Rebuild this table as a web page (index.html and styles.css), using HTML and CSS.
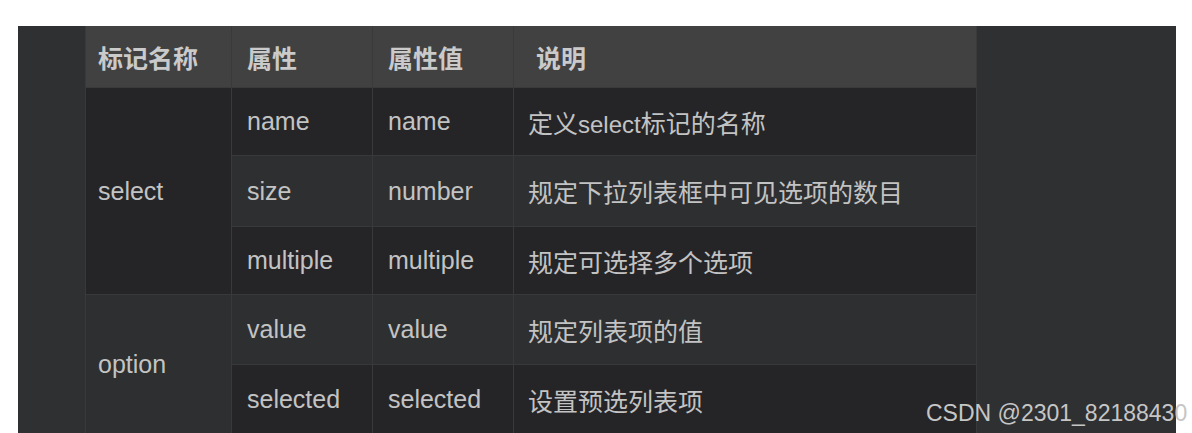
FILE: index.html
```html
<!DOCTYPE html>
<html lang="zh-CN">
<head>
<meta charset="utf-8">
<title>select 标记属性</title>
<link rel="stylesheet" href="styles.css">
</head>
<body>
<div class="panel">
  <table class="attr-table">
    <colgroup>
      <col class="c1"><col class="c2"><col class="c3"><col class="c4">
    </colgroup>
    <thead>
      <tr>
        <th class="first">标记名称</th>
        <th>属性</th>
        <th>属性值</th>
        <th class="desc-head">说明</th>
      </tr>
    </thead>
    <tbody>
      <tr class="r1 dark">
        <td class="first dark" rowspan="3">select</td>
        <td>name</td>
        <td>name</td>
        <td class="desc">定义<span class="inline-latin">select</span>标记的名称</td>
      </tr>
      <tr class="r2 light">
        <td>size</td>
        <td>number</td>
        <td class="desc">规定下拉列表框中可见选项的数目</td>
      </tr>
      <tr class="r3 dark">
        <td>multiple</td>
        <td>multiple</td>
        <td class="desc">规定可选择多个选项</td>
      </tr>
      <tr class="r4 light">
        <td class="first light" rowspan="2">option</td>
        <td>value</td>
        <td>value</td>
        <td class="desc">规定列表项的值</td>
      </tr>
      <tr class="r5 dark">
        <td>selected</td>
        <td>selected</td>
        <td class="desc">设置预选列表项</td>
      </tr>
    </tbody>
  </table>
</div>
<div class="watermark">CSDN @2301_82188430</div>
</body>
</html>
```

FILE: styles.css
```css
html, body {
  margin: 0;
  padding: 0;
  background: #ffffff;
  overflow: hidden;
}

body {
  position: relative;
  width: 1192px;
  height: 433px;
  font-family: "Liberation Sans", Arial, "Noto Sans CJK SC", sans-serif;
}

.panel {
  margin: 26px 0 0 18px;
  width: 1158px;
  height: 407px;
  background: #2f3032;
  padding-left: 67px;
  box-sizing: border-box;
  overflow: hidden;
}

.attr-table {
  border-collapse: collapse;
  table-layout: fixed;
  width: 891px;
  color: #c3c3c3;
  font-size: 25px;
  border-left: 1px solid #38393b;
  border-right: 1px solid #38393b;
}

.c1 { width: 146px; }
.c2 { width: 141px; }
.c3 { width: 141px; }
.c4 { width: 463px; }

.attr-table th,
.attr-table td {
  border: 1px solid #38393b;
  padding: 0 0 0 15px;
  text-align: left;
  vertical-align: middle;
  white-space: nowrap;
}

.attr-table thead th {
  background: #414141;
  height: 61px;
  font-weight: bold;
  color: #cacaca;
  border-top: none;
  border-color: #3a3a3a;
}

.attr-table th.first,
.attr-table td.first {
  padding-left: 12px;
}

.attr-table th.desc-head {
  padding-left: 22px;
}

.attr-table td.desc {
  padding-left: 14px;
}

.inline-latin {
  font-size: 24px;
}

.dark { background: #252528; }
.light { background: #2e2f31; }

.r1 { height: 68px; }
.r2 { height: 71px; }
.r3 { height: 68px; }
.r4 { height: 70px; }
.r5 { height: 70px; }

.watermark {
  position: absolute;
  left: 926px;
  top: 399px;
  font-family: "Liberation Sans", Arial, sans-serif;
  font-size: 23px;
  line-height: 28px;
  color: #c6c6c6;
  white-space: nowrap;
}
```
